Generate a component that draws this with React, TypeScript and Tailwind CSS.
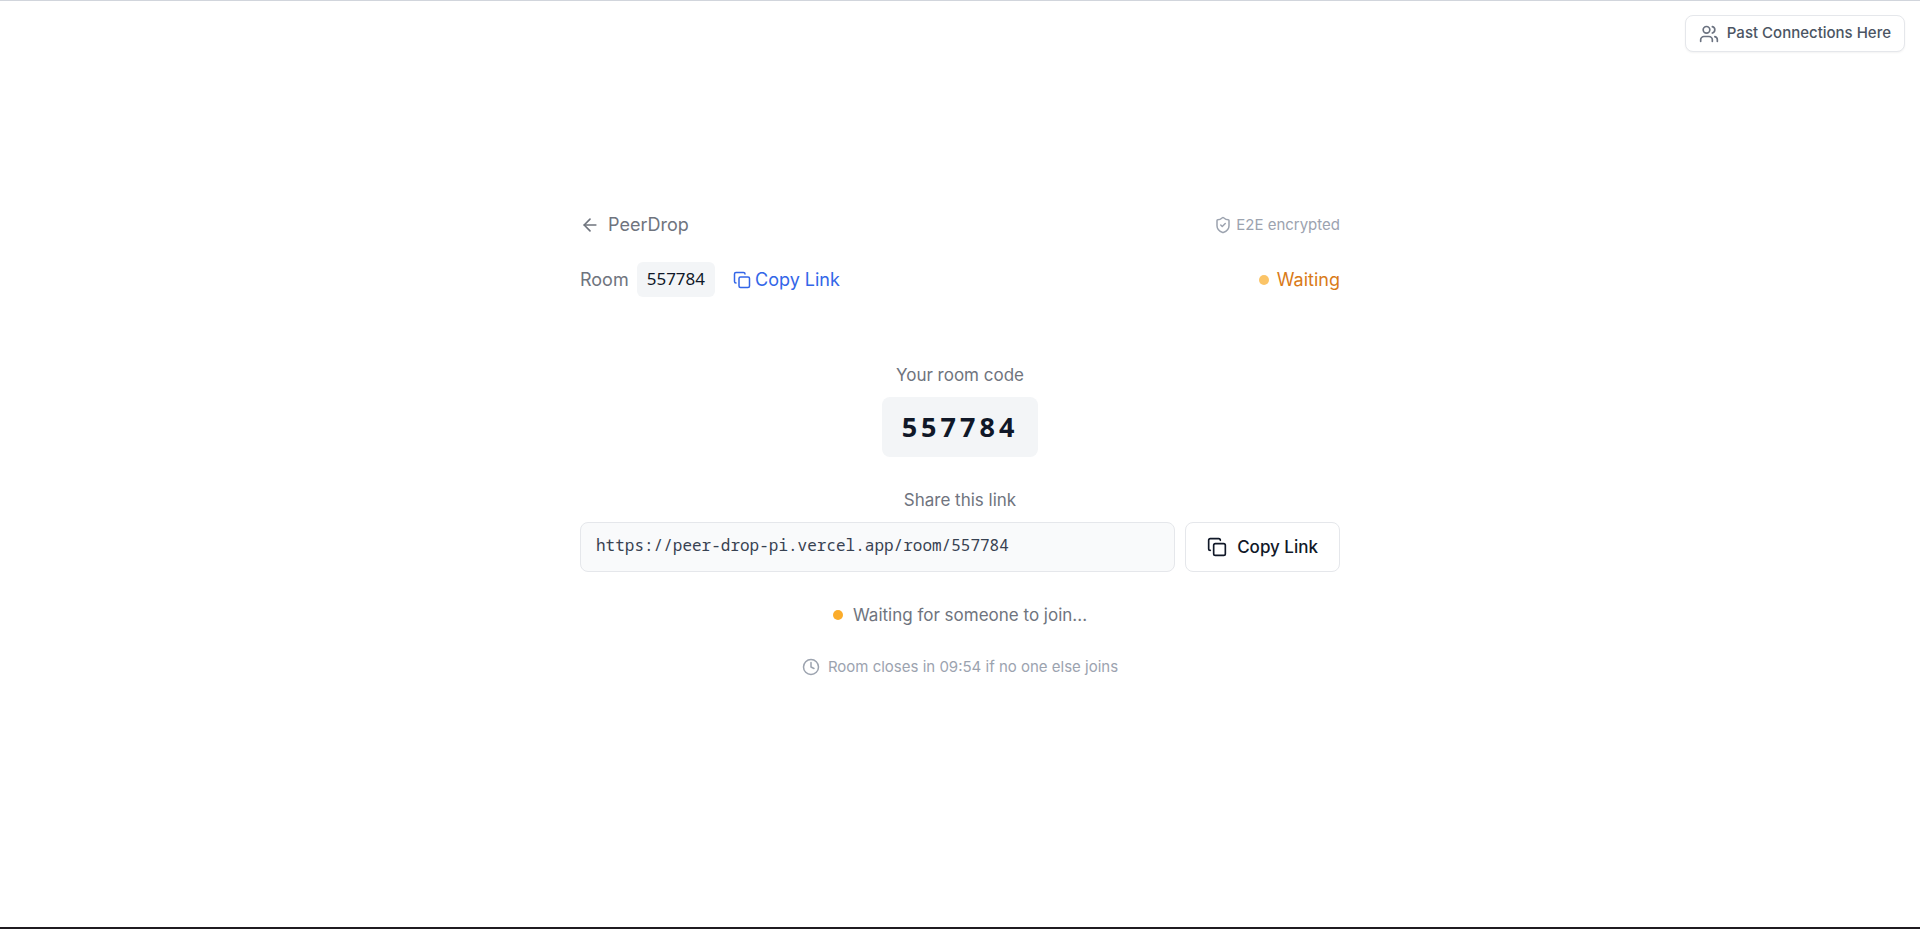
import React from 'react';
import { ArrowLeft, Clock, Copy, ShieldCheck, Users } from 'lucide-react';

const roomCode = '557784';
const roomLink = `https://peer-drop-pi.vercel.app/room/${roomCode}`;

const PastConnections = () => (
  <button
    type="button"
    className="flex h-[37px] items-center gap-2 rounded-lg border border-gray-200 bg-white px-[13px] text-[15px] font-medium text-[#4b5563] shadow-xs"
  >
    <Users className="size-5 text-[#6b7280]" />
    Past Connections Here
  </button>
);

const RoomHeader = () => (
  <header>
    <div className="flex items-center justify-between">
      <a href="#" className="flex items-center gap-2 text-lg text-[#6f747e]">
        <ArrowLeft className="size-5" />
        PeerDrop
      </a>
      <span className="flex items-center gap-1 text-[15px] text-[#9ca3af]">
        <ShieldCheck className="size-[18px]" />
        E2E encrypted
      </span>
    </div>
    <div className="mt-[23px] flex items-center justify-between">
      <div className="flex items-center text-lg text-[#6f747e]">
        Room
        <code className="mr-[18px] ml-2 flex h-[35px] items-center rounded-md bg-[#f3f5f7] px-2.5 font-['Noto_Sans',sans-serif] text-[17px] text-gray-900">
          {roomCode}
        </code>
        <button type="button" className="flex items-center gap-1 text-[#3366e8]">
          <Copy className="size-[18px]" />
          Copy Link
        </button>
      </div>
      <span className="flex items-center gap-2 text-lg text-[#d97a18]">
        <span className="size-2.5 rounded-full bg-[#fbc467]" />
        Waiting
      </span>
    </div>
  </header>
);

const App = () => {
  return (
    <div className="flex min-h-screen flex-col border-t border-b-2 border-t-gray-300 border-b-[#1f1b20] bg-white font-['Inter',sans-serif]">
      <div className="flex justify-end px-[15px] pt-3.5">
        <PastConnections />
      </div>
      <main className="mx-auto w-full max-w-[760px] pt-[159px]">
        <RoomHeader />

        <section className="mt-16 flex flex-col items-center text-[17px] leading-7 text-[#6f747e]">
          <p>Your room code</p>
          <p className="mt-2 rounded-lg bg-[#f3f5f7] px-5 py-3 font-['Noto_Sans',sans-serif] text-[27px] leading-9 font-bold tracking-[4px] text-gray-900">
            {roomCode}
          </p>

          <label htmlFor="room-link" className="mt-[29px]">Share this link</label>
          <div className="mt-2 flex w-full gap-2.5">
            <input
              id="room-link"
              readOnly
              value={roomLink}
              className="h-[50px] min-w-0 flex-1 rounded-lg border border-gray-200 bg-[#f9fafb] px-[15px] pb-1 font-['Noto_Sans_Mono','DejaVu_Sans_Mono',monospace] text-base text-[#374151]"
            />
            <button
              type="button"
              className="flex h-[50px] items-center gap-2.5 rounded-lg border border-gray-200 bg-white px-[21px] font-medium text-gray-900"
            >
              <Copy className="size-5" />
              Copy Link
            </button>
          </div>

          <p className="mt-[29px] flex items-center gap-2.5">
            <span className="size-2.5 rounded-full bg-[#fbac2b]" />
            Waiting for someone to join...
          </p>
          <p className="mt-6 flex items-center gap-2 text-[15px] text-[#9ca3af]">
            <Clock className="size-[18px]" />
            Room closes in 09:54 if no one else joins
          </p>
        </section>
      </main>
    </div>
  );
};

export default App;
